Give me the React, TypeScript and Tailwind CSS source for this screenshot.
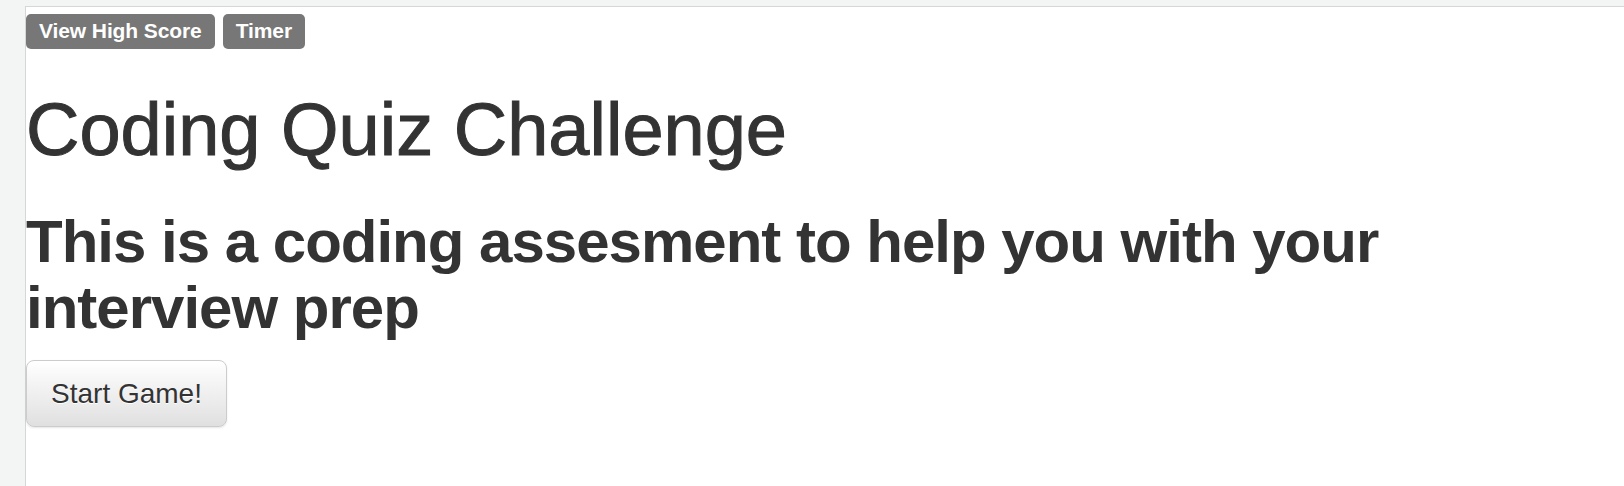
import React from 'react';

const Badge = ({ children }: { children: React.ReactNode }) => (
  <span className="inline-flex h-[35px] items-center rounded-[5px] bg-[#777777] px-[13px] pb-[3px] text-[21px] font-bold leading-none tracking-[-0.1px] text-white">
    {children}
  </span>
);

const App = () => {
  return (
    <div className="min-h-screen bg-[#f3f4f4] pl-[25px] pt-[6px] font-['Liberation_Sans',Arial,sans-serif] text-[#333333]">
      <div className="min-h-[480px] border-l border-t border-[#d6d6d6] bg-white pt-[7px]">
        {/* Header badges */}
        <div className="flex gap-[8px]">
          <Badge>View High Score</Badge>
          <Badge>Timer</Badge>
        </div>

        {/* Intro */}
        <h1 className="mt-[40px] text-[74px] font-normal leading-[1.1] [-webkit-text-stroke:1px_#333333]">
          Coding Quiz Challenge
        </h1>
        <h2 className="mt-[39px] text-[60px] font-bold leading-[1.1] tracking-[-1px]">
          This is a coding assesment to help you with your interview prep
        </h2>

        <button className="mt-[19px] h-[67px] w-[201px] rounded-[8px] border border-[#cccccc] bg-gradient-to-b from-white to-[#e0e0e0] text-[28px] text-[#333333] shadow-[inset_0_1px_0_rgba(255,255,255,0.15),0_1px_2px_rgba(0,0,0,0.1)] [text-shadow:0_1px_0_#fff]">
          Start Game!
        </button>
      </div>
    </div>
  );
};

export default App;
